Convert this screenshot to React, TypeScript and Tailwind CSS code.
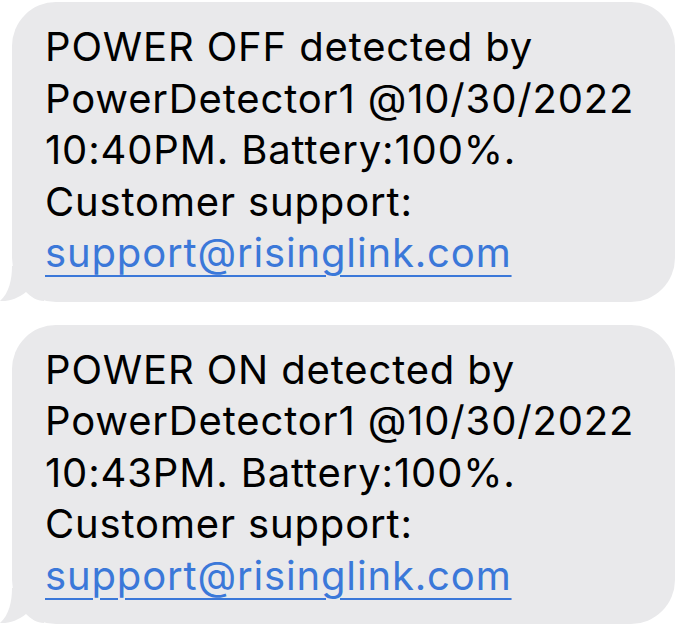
import React from "react";

type Msg = { status: string; time: string };

const messages: Msg[] = [
  { status: "POWER OFF", time: "10:40PM" },
  { status: "POWER ON", time: "10:43PM" },
];

// iMessage-style tail at the bubble's lower-left corner
function Tail() {
  return (
    <svg
      className="absolute left-0 bottom-0"
      width="44"
      height="36"
      viewBox="0 0 44 36"
    >
      <path
        d="M12 0 C12 14 9 27 0 35 C9 35.5 19 32 26 26 C31 31 37 35 44 35 L44 0 Z"
        fill="#e9e9eb"
      />
    </svg>
  );
}

function Bubble({ msg }: { msg: Msg }) {
  return (
    <div className="relative pl-[12px]">
      <Tail />
      <div className="relative w-[663px] rounded-[44px] bg-[#e9e9eb] pl-[33px] pr-4 pt-[19px] pb-[23px] text-[40px] leading-[51.5px] tracking-[0.85px] text-black">
        <div>{msg.status} detected by</div>
        <div>PowerDetector1 @10/30/2022</div>
        <div>{msg.time}. Battery:100%.</div>
        <div>Customer support:</div>
        <div>
          <span className="text-[#3b78d9] underline decoration-[2px] underline-offset-[8px]">
            support@risinglink.com
          </span>
        </div>
      </div>
    </div>
  );
}

export default function App() {
  return (
    <div
      className="w-[679px] h-[629px] bg-white pt-[2px] flex flex-col gap-[23px] overflow-hidden"
      style={{ fontFamily: 'Inter, "Liberation Sans", Arial, sans-serif' }}
    >
      {messages.map((m) => (
        <Bubble key={m.status} msg={m} />
      ))}
    </div>
  );
}
